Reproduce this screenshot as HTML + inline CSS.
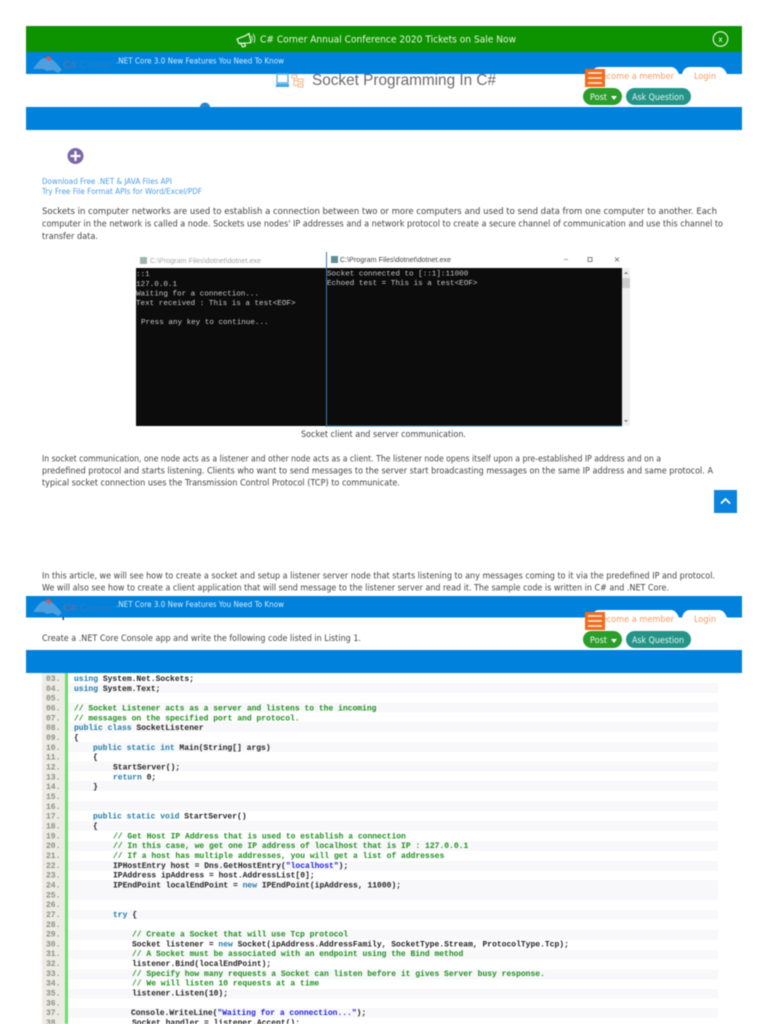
<!DOCTYPE html>
<html><head><meta charset="utf-8"><title>Socket Programming In C#</title>
<style>
html,body{margin:0;padding:0;background:#fff;width:768px;height:1024px;overflow:hidden}
svg{position:absolute;left:0;top:0;filter:blur(.45px)}
text{font-family:"DejaVu Sans","Liberation Sans",sans-serif;white-space:pre}
.ls{font-family:"Liberation Sans",sans-serif}
.p{font-size:8.700px;fill:#444}
.c text{font-family:"Liberation Mono",monospace;font-size:8px;font-weight:bold;fill:#222}
.n text{font-family:"Liberation Mono",monospace;font-size:8px;font-weight:bold;fill:#8f8f85}
.c .k{fill:#1f7aa8}.c .g{fill:#1c8f1c}.c .s{fill:#2222dd}
.con text{font-family:"Liberation Mono",monospace;font-size:7.6px;fill:#c8c8c8}
</style></head><body>
<svg width="768" height="1024" viewBox="0 0 768 1024" xmlns="http://www.w3.org/2000/svg">
<circle cx="289" cy="79" r="16" fill="none" stroke="#f7f5f2" stroke-width="1"/>
<!-- top header -->
<rect x="26" y="26" width="716" height="26" fill="#0d9300"/>
<rect x="26" y="52" width="716" height="22" fill="#0082dc"/>
<rect x="26" y="107" width="716" height="23" fill="#0082dc"/>
<path d="M200 107a5 4.500 0 0 1 10 0z" fill="#2a86c8"/>
<path d="M237 39l9-3.500 3-2 2 9-3 .5-9 .5zM240.500 42.500l2 4.500 3-1-1.500-3.500" fill="none" stroke="#fff" stroke-width="1.100"/>
<path d="M251 36q2 2 1 5M253 34q3 4 1 9" stroke="#fff" fill="none" stroke-width=".8"/>
<text x="260" y="42.500" font-size="9.300" fill="#e8f5e0" textLength="256" lengthAdjust="spacingAndGlyphs">C# Corner Annual Conference 2020 Tickets on Sale Now</text>
<circle cx="720.500" cy="39" r="7.300" fill="none" stroke="#fff" stroke-width="1"/>
<text x="720.500" y="42" font-size="7.500" fill="#fff" text-anchor="middle">x</text>
<!-- logo 1 -->
<path d="M33 69l6-8 4-3 4 1 3-1 4 3 3 3 5 6-4 3-5-3-6 1-4-2z" fill="#4d9fe0"/>
<path d="M45 58l4-2 3 3-3 2z" fill="#c8605a"/>
<text class="ls" x="63" y="68" font-size="10.500" fill="#2b7cc8" textLength="49" lengthAdjust="spacingAndGlyphs"><tspan fill="#7a6c98">C#</tspan> Corner</text>
<text x="116" y="63.500" font-size="7.800" fill="#d8ecfa" textLength="168" lengthAdjust="spacingAndGlyphs">.NET Core 3.0 New Features You Need To Know</text>
<!-- title -->
<path d="M277 74h11v9h-11z" fill="none" stroke="#5cb3ea" stroke-width="1.400"/>
<rect x="276" y="84" width="13" height="3" fill="#41a5e6"/>
<path d="M292 75h5v3h-5zM298 79h5v3h-5zM298 84h5v3h-5zM294 78v7.500h4M294 80.500h4" fill="none" stroke="#f7b58a" stroke-width="1"/>
<text class="ls" x="312" y="85" font-size="16" fill="#6a6a6a" textLength="184" lengthAdjust="spacingAndGlyphs">Socket Programming In C#</text>
<!-- tabs -->
<path d="M592 74q1-7 7-7h72q5 0 8 7zM682 74q2-7 8-7h29q5 0 8 7z" fill="#fff"/>
<text x="596" y="79" font-size="8.500" fill="#f49a63" textLength="78" lengthAdjust="spacingAndGlyphs">Become a member</text>
<text x="694" y="79" font-size="8.500" fill="#f49a63" textLength="22" lengthAdjust="spacingAndGlyphs">Login</text>
<rect x="585" y="69" width="20" height="18" fill="#f26a1b"/>
<path d="M588 73h14M588 78h14M588 83h14" stroke="#fde2c8" stroke-width="1.800"/>
<rect x="583" y="88" width="39" height="17" rx="8.500" fill="#2a9d2a"/>
<text x="590" y="100" font-size="8.500" fill="#f1f8ee" textLength="17" lengthAdjust="spacingAndGlyphs">Post</text>
<path d="M611 96h6l-3 4z" fill="#fff"/>
<rect x="626" y="88" width="65" height="17" rx="8.500" fill="#259488"/>
<text x="632" y="100" font-size="8.500" fill="#e8f5f3" textLength="52" lengthAdjust="spacingAndGlyphs">Ask Question</text>
<!-- plus + links -->
<circle cx="75.500" cy="156" r="8" fill="#7b68a6"/>
<path d="M75.500 151v10M70.500 156h10" stroke="#fff" stroke-width="2.200"/>
<text x="42" y="184" font-size="8" fill="#4a9de6" textLength="130" lengthAdjust="spacingAndGlyphs">Download Free .NET &amp; JAVA Files API</text>
<text x="42" y="194" font-size="8" fill="#4a9de6" textLength="160" lengthAdjust="spacingAndGlyphs">Try Free File Format APIs for Word/Excel/PDF</text>
<!-- paragraph 1 -->
<text class="p" x="42" y="214" textLength="675" lengthAdjust="spacingAndGlyphs">Sockets in computer networks are used to establish a connection between two or more computers and used to send data from one computer to another. Each</text>
<text class="p" x="42" y="226.500" textLength="681" lengthAdjust="spacingAndGlyphs">computer in the network is called a node. Sockets use nodes' IP addresses and a network protocol to create a secure channel of communication and use this channel to</text>
<text class="p" x="42" y="239" textLength="56" lengthAdjust="spacingAndGlyphs">transfer data.</text>
<!-- console image -->
<rect x="140" y="257" width="7" height="7" fill="#9fb4b4"/>
<text class="ls" x="150" y="263" font-size="7.500" fill="#a8a8a8" textLength="111" lengthAdjust="spacingAndGlyphs">C:\Program Files\dotnet\dotnet.exe</text>
<rect x="331" y="256" width="7" height="7" fill="#5f8f93"/>
<text class="ls" x="340" y="262" font-size="7.500" fill="#444" textLength="111" lengthAdjust="spacingAndGlyphs">C:\Program Files\dotnet\dotnet.exe</text>
<path d="M564 259.500h4" stroke="#888" stroke-width=".8"/>
<rect x="588" y="257.500" width="4" height="4" fill="none" stroke="#666" stroke-width=".8"/>
<path d="M615 257.500l4 4M619 257.500l-4 4" stroke="#666" stroke-width=".8"/>
<rect x="136" y="268" width="486" height="158" fill="#0c0c0c"/>
<rect x="326" y="252" width="1" height="175" fill="#3f7cb3"/>
<rect x="326" y="425.500" width="296" height="1" fill="#3f7cb3"/>
<rect x="622" y="268" width="8" height="158" fill="#f0f0f0"/>
<rect x="622" y="278" width="8" height="10" fill="#cdcdcd"/>
<path d="M624.500 274l1.500-1.500 1.500 1.500M624.500 420l1.500 1.500 1.500-1.500" stroke="#555" stroke-width=".8" fill="none"/>
<g class="con">
<text x="136" y="276">::1</text>
<text x="136" y="286">127.0.0.1</text>
<text x="136" y="295.500">Waiting for a connection...</text>
<text x="136" y="305">Text received : This is a test&lt;EOF&gt;</text>
<text x="141" y="324">Press any key to continue...</text>
<text x="327" y="275.500">Socket connected to [::1]:11000</text>
<text x="327" y="285">Echoed test = This is a test&lt;EOF&gt;</text>
</g>
<text class="p" x="301" y="437" textLength="165" lengthAdjust="spacingAndGlyphs">Socket client and server communication.</text>
<!-- paragraph 2 -->
<text class="p" x="42" y="461.500" textLength="619" lengthAdjust="spacingAndGlyphs">In socket communication, one node acts as a listener and other node acts as a client. The listener node opens itself upon a pre-established IP address and on a</text>
<text class="p" x="42" y="473.500" textLength="671" lengthAdjust="spacingAndGlyphs">predefined protocol and starts listening. Clients who want to send messages to the server start broadcasting messages on the same IP address and same protocol. A</text>
<text class="p" x="42" y="485.500" textLength="358" lengthAdjust="spacingAndGlyphs">typical socket connection uses the Transmission Control Protocol (TCP) to communicate.</text>
<rect x="714" y="490" width="23" height="23" fill="#0a84de"/>
<path d="M721 503.500l4.500-4.500 4.500 4.500" stroke="#fff" stroke-width="1.800" fill="none"/>
<!-- paragraph 3 -->
<text class="p" x="42" y="578.500" textLength="673" lengthAdjust="spacingAndGlyphs">In this article, we will see how to create a socket and setup a listener server node that starts listening to any messages coming to it via the predefined IP and protocol.</text>
<text class="p" x="42" y="590.500" textLength="627" lengthAdjust="spacingAndGlyphs">We will also see how to create a client application that will send message to the listener server and read it. The sample code is written in C# and .NET Core.</text>
<!-- second header -->
<rect x="26" y="596" width="716" height="21.500" fill="#0082dc"/>
<rect x="26" y="650" width="716" height="23" fill="#0082dc"/>
<path d="M33 612l6-8 4-3 4 1 3-1 4 3 3 3 5 6-4 3-5-3-6 1-4-2z" fill="#4d9fe0"/>
<path d="M45 601l4-2 3 3-3 2z" fill="#c8605a"/>
<text class="ls" x="63" y="611" font-size="10.500" fill="#2b7cc8" textLength="49" lengthAdjust="spacingAndGlyphs"><tspan fill="#7a6c98">C#</tspan> Corner</text>
<text x="116" y="607" font-size="7.800" fill="#d8ecfa" textLength="168" lengthAdjust="spacingAndGlyphs">.NET Core 3.0 New Features You Need To Know</text>
<rect x="62.500" y="617" width="1.500" height="3" fill="#444"/>
<path d="M592 617.500q1-7.500 7-7.500h72q5 0 8 7.500zM682 617.500q2-7.500 8-7.500h29q5 0 8 7.500z" fill="#fff"/>
<text x="596" y="622" font-size="8.500" fill="#f49a63" textLength="78" lengthAdjust="spacingAndGlyphs">Become a member</text>
<text x="694" y="622" font-size="8.500" fill="#f49a63" textLength="22" lengthAdjust="spacingAndGlyphs">Login</text>
<rect x="585" y="612" width="20" height="18" fill="#f26a1b"/>
<path d="M588 616h14M588 621h14M588 626h14" stroke="#fde2c8" stroke-width="1.800"/>
<rect x="583" y="631" width="39" height="17" rx="8.500" fill="#2a9d2a"/>
<text x="590" y="643" font-size="8.500" fill="#f1f8ee" textLength="17" lengthAdjust="spacingAndGlyphs">Post</text>
<path d="M611 639h6l-3 4z" fill="#fff"/>
<rect x="626" y="631" width="65" height="17" rx="8.500" fill="#259488"/>
<text x="632" y="643" font-size="8.500" fill="#e8f5f3" textLength="52" lengthAdjust="spacingAndGlyphs">Ask Question</text>
<text class="p" x="42" y="641" textLength="319" lengthAdjust="spacingAndGlyphs">Create a .NET Core Console app and write the following code listed in Listing 1.</text>
<!-- code gutter and bands -->
<rect x="42" y="673" width="23" height="351" fill="#ecebe4"/>
<rect x="65" y="673" width="3" height="351" fill="#6fdc6f"/>
<g fill="#f8f8fa">
<rect x="68" y="683" width="650" height="10"/>
<rect x="68" y="702.500" width="650" height="10"/>
<rect x="68" y="722" width="650" height="10"/>
<rect x="68" y="742" width="650" height="10"/>
<rect x="68" y="761.500" width="650" height="10"/>
<rect x="68" y="781" width="650" height="10"/>
<rect x="68" y="801" width="650" height="10"/>
<rect x="68" y="821" width="650" height="10"/>
<rect x="68" y="841" width="650" height="10"/>
<rect x="68" y="861" width="650" height="10"/>
<rect x="68" y="880" width="650" height="20"/>
<rect x="68" y="910" width="650" height="9.500"/>
<rect x="68" y="930" width="650" height="10"/>
<rect x="68" y="950" width="650" height="9.500"/>
<rect x="68" y="969.500" width="650" height="10"/>
<rect x="68" y="989" width="650" height="9.500"/>
<rect x="68" y="1008" width="650" height="10"/>
</g>
<g class="n">
<text x="46" y="681">03.</text><text x="46" y="690.800">04.</text><text x="46" y="700.700">05.</text><text x="46" y="710.500">06.</text><text x="46" y="720.300">07.</text><text x="46" y="730.200">08.</text><text x="46" y="740">09.</text><text x="46" y="749.800">10.</text><text x="46" y="759.600">11.</text><text x="46" y="769.500">12.</text>
<text x="46" y="779.300">13.</text><text x="46" y="789.100">14.</text><text x="46" y="799">15.</text><text x="46" y="808.800">16.</text><text x="46" y="818.600">17.</text><text x="46" y="828.500">18.</text><text x="46" y="838.300">19.</text><text x="46" y="848.100">20.</text><text x="46" y="857.900">21.</text><text x="46" y="867.800">22.</text>
<text x="46" y="877.600">23.</text><text x="46" y="887.400">24.</text><text x="46" y="897.300">25.</text><text x="46" y="907.100">26.</text><text x="46" y="916.900">27.</text><text x="46" y="926.800">28.</text><text x="46" y="936.600">29.</text><text x="46" y="946.400">30.</text><text x="46" y="956.200">31.</text><text x="46" y="966.100">32.</text>
<text x="46" y="975.900">33.</text><text x="46" y="985.700">34.</text><text x="46" y="995.600">35.</text><text x="46" y="1005.400">36.</text><text x="46" y="1015.200">37.</text><text x="46" y="1025">38.</text>
</g>
<g class="c">
<text x="74" y="681"><tspan class="k">using</tspan> System.Net.Sockets;</text>
<text x="74" y="690.800"><tspan class="k">using</tspan> System.Text;</text>
<text x="74" y="710.500" class="g">// Socket Listener acts as a server and listens to the incoming</text>
<text x="74" y="720.300" class="g">// messages on the specified port and protocol.</text>
<text x="74" y="730.200"><tspan class="k">public class</tspan> SocketListener</text>
<text x="74" y="740">{</text>
<text x="93" y="749.800"><tspan class="k">public static int</tspan> Main(String[] args)</text>
<text x="93" y="759.600">{</text>
<text x="113" y="769.500">StartServer();</text>
<text x="113" y="779.300"><tspan class="k">return</tspan> 0;</text>
<text x="93" y="789.100">}</text>
<text x="93" y="818.600"><tspan class="k">public static void</tspan> StartServer()</text>
<text x="93" y="828.500">{</text>
<text x="113" y="838.300" class="g">// Get Host IP Address that is used to establish a connection</text>
<text x="113" y="848.100" class="g">// In this case, we get one IP address of localhost that is IP : 127.0.0.1</text>
<text x="113" y="857.900" class="g">// If a host has multiple addresses, you will get a list of addresses</text>
<text x="113" y="867.800">IPHostEntry host = Dns.GetHostEntry(<tspan class="s">"localhost"</tspan>);</text>
<text x="113" y="877.600">IPAddress ipAddress = host.AddressList[0];</text>
<text x="113" y="887.400">IPEndPoint localEndPoint = <tspan class="k">new</tspan> IPEndPoint(ipAddress, 11000);</text>
<text x="113" y="916.900"><tspan class="k">try</tspan> {</text>
<text x="132" y="936.600" class="g">// Create a Socket that will use Tcp protocol</text>
<text x="132" y="946.400">Socket listener = <tspan class="k">new</tspan> Socket(ipAddress.AddressFamily, SocketType.Stream, ProtocolType.Tcp);</text>
<text x="132" y="956.200" class="g">// A Socket must be associated with an endpoint using the Bind method</text>
<text x="132" y="966.100">listener.Bind(localEndPoint);</text>
<text x="132" y="975.900" class="g">// Specify how many requests a Socket can listen before it gives Server busy response.</text>
<text x="132" y="985.700" class="g">// We will listen 10 requests at a time</text>
<text x="132" y="995.600">listener.Listen(10);</text>
<text x="131" y="1015.200">Console.WriteLine(<tspan class="s">"Waiting for a connection..."</tspan>);</text>
<text x="132" y="1025">Socket handler = listener.Accept();</text>
</g>
</svg>
</body></html>
